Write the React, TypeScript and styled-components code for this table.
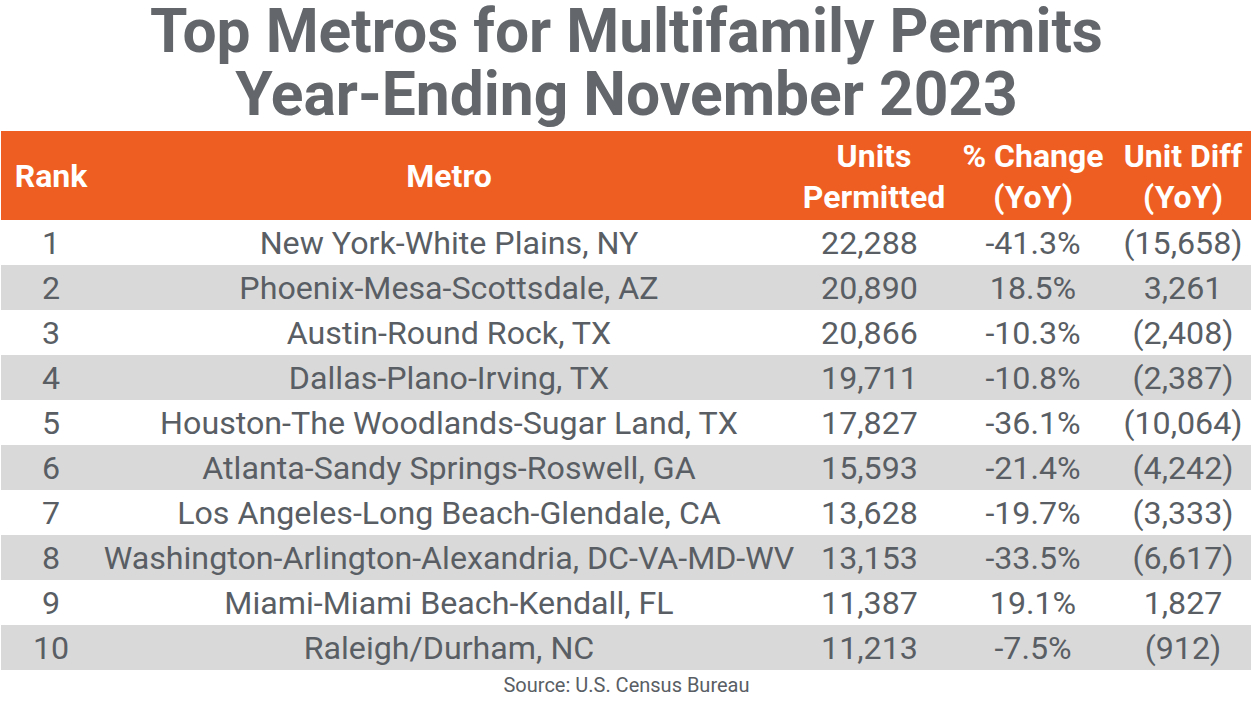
import React, { FC } from "react";
import styled, { createGlobalStyle } from "styled-components";

const GlobalStyle = createGlobalStyle`
  html, body {
    margin: 0;
    padding: 0;
    background: #ffffff;
  }
  body {
    font-family: Roboto, "Liberation Sans", Arial, sans-serif;
  }
`;

const Page = styled.div`
  width: 1253px;
  display: flex;
  flex-direction: column;
  align-items: flex-start;
`;

const Title = styled.h1`
  margin: 0;
  width: 100%;
  text-align: center;
  font-size: 60.5px;
  line-height: 63px;
  font-weight: 700;
  color: #63676b;
`;

const Table = styled.div`
  margin: 5px 0 0 1px;
  width: 1250px;
  display: grid;
  grid-template-columns: 100px 696px 154px 164px 136px;
`;

const HeadCell = styled.div`
  background: #ee5e22;
  color: #ffffff;
  font-weight: 700;
  font-size: 32px;
  line-height: 41px;
  height: 89px;
  padding-top: 2px;
  box-sizing: border-box;
  display: flex;
  align-items: center;
  justify-content: center;
  text-align: center;
  white-space: nowrap;
`;

const Cell = styled.div<{ $shade: boolean; $nudge?: number }>`
  background: ${(p) => (p.$shade ? "#d9d9d9" : "#ffffff")};
  color: #595e64;
  font-size: 32.2px;
  line-height: 46px;
  height: 45px;
  padding-right: ${(p) => p.$nudge ?? 0}px;
  box-sizing: border-box;
  text-align: center;
  white-space: nowrap;
`;

const Source = styled.div`
  margin-top: 3px;
  width: 100%;
  text-align: center;
  font-size: 20px;
  line-height: 24px;
  color: #595e64;
`;

type Row = [string, string, string, string, string];

const rows: Row[] = [
  ["1", "New York-White Plains, NY", "22,288", "-41.3%", "(15,658)"],
  ["2", "Phoenix-Mesa-Scottsdale, AZ", "20,890", "18.5%", "3,261"],
  ["3", "Austin-Round Rock, TX", "20,866", "-10.3%", "(2,408)"],
  ["4", "Dallas-Plano-Irving, TX", "19,711", "-10.8%", "(2,387)"],
  ["5", "Houston-The Woodlands-Sugar Land, TX", "17,827", "-36.1%", "(10,064)"],
  ["6", "Atlanta-Sandy Springs-Roswell, GA", "15,593", "-21.4%", "(4,242)"],
  ["7", "Los Angeles-Long Beach-Glendale, CA", "13,628", "-19.7%", "(3,333)"],
  ["8", "Washington-Arlington-Alexandria, DC-VA-MD-WV", "13,153", "-33.5%", "(6,617)"],
  ["9", "Miami-Miami Beach-Kendall, FL", "11,387", "19.1%", "1,827"],
  ["10", "Raleigh/Durham, NC", "11,213", "-7.5%", "(912)"],
];

// the units figures sit a little left of their header in the source chart
const nudges = [0, 0, 9, 0, 0];

const App: FC = () => {
  return (
    <Page>
      <GlobalStyle />
      <Title>
        Top Metros for Multifamily Permits
        <br />
        Year-Ending November 2023
      </Title>
      <Table>
        <HeadCell>Rank</HeadCell>
        <HeadCell>Metro</HeadCell>
        <HeadCell>
          Units
          <br />
          Permitted
        </HeadCell>
        <HeadCell>
          % Change
          <br />
          (YoY)
        </HeadCell>
        <HeadCell>
          Unit Diff
          <br />
          (YoY)
        </HeadCell>
        {rows.map((r, i) =>
          r.map((v, j) => (
            <Cell key={`${i}-${j}`} $shade={i % 2 === 1} $nudge={nudges[j]}>
              {v}
            </Cell>
          ))
        )}
      </Table>
      <Source>Source: U.S. Census Bureau</Source>
    </Page>
  );
};

export default App;
